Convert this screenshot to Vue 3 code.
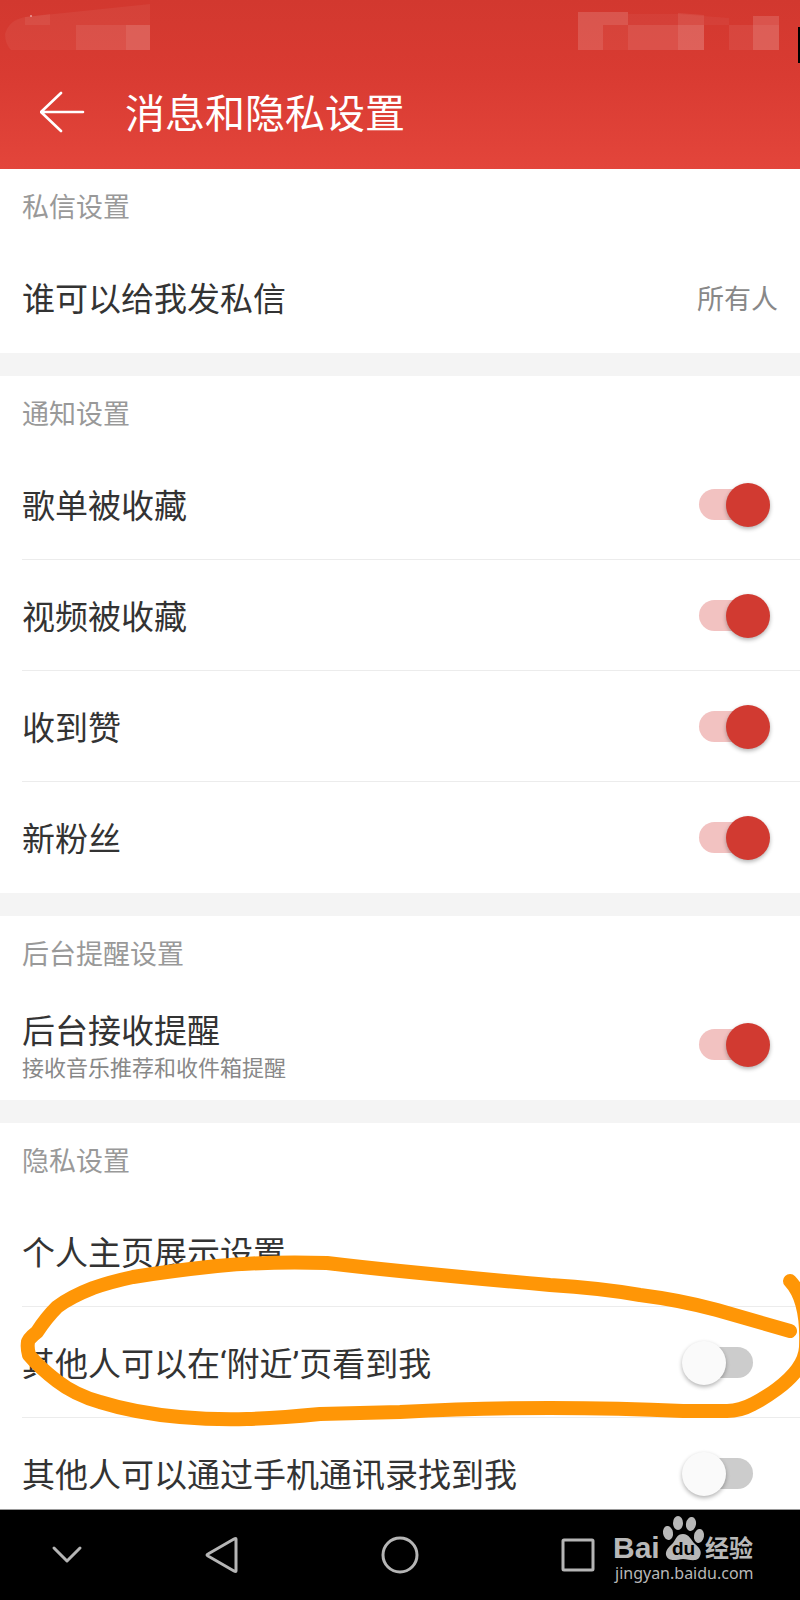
<template>
    <div class="app">
        <header class="header">
            <div class="status">
                <svg class="status__mosaic" width="145" height="54" viewBox="0 0 145 54">
                    <path d="M0 34Q4 20 20 17L145 4V50H6Q0 44 0 34Z" fill="#fff" fill-opacity=".05" />
                    <path d="M20 17L45 14V25H20Z" fill="#fff" fill-opacity=".06" />
                    <rect x="71" y="25" width="50" height="25" fill="#fff" fill-opacity=".08" />
                    <rect x="121" y="25" width="24" height="25" fill="#fff" fill-opacity=".15" />
                    <circle cx="26" cy="16" r="1" fill="#fff" fill-opacity=".5" />
                </svg>
                <svg class="status__mosaic" width="201" height="54" viewBox="0 0 201 54">
                    <path d="M50 14H100L151 18V25H50Z" fill="#fff" fill-opacity=".04" />
                    <path d="M0 12H50V25H25V50H0Z" fill="#fff" fill-opacity=".15" />
                    <rect x="25" y="25" width="25" height="25" fill="#fff" fill-opacity=".05" />
                    <rect x="50" y="25" width="50" height="25" fill="#fff" fill-opacity=".12" />
                    <path d="M100 13L126 15V25H100Z" fill="#fff" fill-opacity=".08" />
                    <rect x="100" y="25" width="26" height="25" fill="#fff" fill-opacity=".2" />
                    <rect x="151" y="25" width="24" height="25" fill="#fff" fill-opacity=".07" />
                    <rect x="175" y="16" width="26" height="9" fill="#fff" fill-opacity=".14" />
                    <rect x="175" y="25" width="26" height="25" fill="#fff" fill-opacity=".19" />
                </svg>
                <i class="status__edge"></i>
            </div>
            <div class="toolbar">
                <button class="toolbar__back" type="button" aria-label="返回">
                    <svg width="46" height="42" viewBox="0 0 46 42">
                        <path d="M21 2L1 21L21 40M2 21H43" fill="none" stroke="#fff" stroke-width="2.6" stroke-linecap="round" stroke-linejoin="round" />
                    </svg>
                </button>
                <h1 class="toolbar__title">消息和隐私设置</h1>
            </div>
        </header>

        <main class="list">
            <section v-for="group in groups" :key="group.title" class="group">
                <h2 class="group__title">{{ group.title }}</h2>
                <template v-for="item in group.items" :key="item.name">
                    <label v-if="'on' in item" class="row">
                        <span class="row__text">
                            <span class="row__name">{{ item.name }}</span>
                            <span v-if="item.desc" class="row__desc">{{ item.desc }}</span>
                        </span>
                        <input v-model="item.on" class="switch" type="checkbox" />
                    </label>
                    <button v-else class="row" type="button">
                        <span class="row__text">
                            <span class="row__name">{{ item.name }}</span>
                        </span>
                        <span v-if="item.value" class="row__value">{{ item.value }}</span>
                    </button>
                </template>
                <svg v-if="group.marked" class="mark" viewBox="0 0 800 200">
                    <path d="M790 91Q755 81 717 70Q680 60 640 55Q600 48 550 45Q480 39 400 31Q360 27 327 23Q270 21 217 26Q170 31 133 37Q110 42 93 48Q70 57 57 67Q46 78 37 92Q28 99 28 102Q27 108 29 115Q40 128 57 141Q75 155 100 162Q135 173 180 177Q215 180 247 179Q280 178 320 174Q360 173 400 172Q480 168 550 168Q620 168 683 171H727Q740 171 753 164Q765 158 777 149Q805 128 806 107Q808 60 790 41" />
                </svg>
            </section>
        </main>

        <nav class="nav">
            <button class="nav__btn" type="button" aria-label="收起">
                <svg width="32" height="20" viewBox="0 0 32 20"><path d="M3 3L16 16L29 3" /></svg>
            </button>
            <button class="nav__btn" type="button" aria-label="返回">
                <svg width="36" height="40" viewBox="0 0 36 40"><path d="M32 4V36Q32 37 30 36L4 21Q2 20 4 19L30 4Q32 3 32 4Z" /></svg>
            </button>
            <button class="nav__btn" type="button" aria-label="主页">
                <svg width="40" height="40" viewBox="0 0 40 40"><circle cx="20" cy="20" r="17" /></svg>
            </button>
            <button class="nav__btn" type="button" aria-label="多任务">
                <svg width="36" height="36" viewBox="0 0 36 36"><rect x="3" y="3" width="30" height="30" rx="1" /></svg>
            </button>
            <svg class="watermark" width="148" height="76" viewBox="0 0 148 76">
                <g fill="#b8b8b8">
                    <text class="watermark__bai" x="1" y="42">Bai</text>
                    <ellipse cx="56" cy="17" rx="5" ry="7" transform="rotate(-10 56 17)" />
                    <ellipse cx="66" cy="7" rx="5" ry="7" />
                    <ellipse cx="79" cy="8" rx="5" ry="7" transform="rotate(10 79 8)" />
                    <ellipse cx="87" cy="20" rx="5" ry="7" transform="rotate(10 87 20)" />
                    <path d="M71 18C77 18 79 24 83 28C88 32 90 36 88 40C86 46 79 44 71 43C64 44 56 46 54 39C53 34 58 30 61 27C64 23 65 18 71 18Z" />
                    <text class="watermark__cn" x="93" y="41">经验</text>
                    <text class="watermark__url" x="3" y="63">jingyan.baidu.com</text>
                </g>
                <text class="watermark__du" x="60" y="39">du</text>
            </svg>
        </nav>
    </div>
</template>

<script setup>
import { reactive } from 'vue';

const groups = reactive([
    { title: '私信设置', items: [{ name: '谁可以给我发私信', value: '所有人' }] },
    {
        title: '通知设置',
        items: [
            { name: '歌单被收藏', on: true },
            { name: '视频被收藏', on: true },
            { name: '收到赞', on: true },
            { name: '新粉丝', on: true }
        ]
    },
    { title: '后台提醒设置', items: [{ name: '后台接收提醒', desc: '接收音乐推荐和收件箱提醒', on: true }] },
    {
        title: '隐私设置',
        marked: true,
        items: [
            { name: '个人主页展示设置' },
            { name: '其他人可以在‘附近’页看到我', on: false },
            { name: '其他人可以通过手机通讯录找到我', on: false }
        ]
    }
]);
</script>

<style>
body {
    margin: 0;
    background: #fff;
}
</style>

<style scoped>
.app {
    display: flex;
    flex-direction: column;
    height: 100vh;
    font-family: Roboto, 'Noto Sans CJK SC', sans-serif;
    color: #333;
}
button {
    border: none;
    padding: 0;
    background: transparent;
    font: inherit;
    color: inherit;
    cursor: pointer;
}
svg {
    display: block;
}
.header {
    flex: none;
    background: linear-gradient(#d2382f, #d93b32 45%, #e3453b);
}
.status {
    position: relative;
    display: flex;
    justify-content: space-between;
    height: 54px;
    padding: 0 21px 0 5px;
}
.status__edge {
    position: absolute;
    top: 27px;
    right: 0;
    width: 2px;
    height: 36px;
    background: #000;
}
.toolbar {
    display: flex;
    align-items: center;
    gap: 39px;
    height: 115px;
    padding: 0 40px;
}
.toolbar__title {
    margin: 0;
    padding-top: 6px;
    font-size: 40px;
    font-weight: 400;
    line-height: 60px;
    color: #fff;
}
.list {
    flex: 1;
    min-height: 0;
    overflow-y: auto;
    scrollbar-width: none;
}
.group {
    position: relative;
}
.group + .group {
    border-top: 23px solid #f4f4f4;
}
.group__title {
    margin: 0;
    padding: 18px 22px 13px;
    font-size: 27px;
    font-weight: 400;
    line-height: 42px;
    color: #999;
}
.row {
    position: relative;
    display: flex;
    align-items: center;
    justify-content: space-between;
    box-sizing: border-box;
    width: 100%;
    height: 111px;
    padding: 0 22px;
    text-align: left;
    cursor: pointer;
}
.row:not(:last-child)::after {
    content: '';
    position: absolute;
    right: 0;
    bottom: 0;
    left: 22px;
    height: 1px;
    background: #ececec;
}
.row__text {
    display: flex;
    flex-direction: column;
    padding-top: 4px;
}
.row__name {
    font-size: 33px;
    line-height: 44px;
}
.row__desc {
    font-size: 22px;
    line-height: 30px;
    color: #888;
}
.row__value {
    padding-top: 4px;
    font-size: 27px;
    line-height: 42px;
    color: #888;
}
.switch {
    position: relative;
    flex: none;
    appearance: none;
    width: 88px;
    height: 44px;
    margin: 0 8px 0 0;
    cursor: pointer;
}
.switch::before {
    content: '';
    position: absolute;
    inset: 6px 17px 7px 17px;
    border-radius: 16px;
    background: #ccc;
}
.switch::after {
    content: '';
    position: absolute;
    top: 0;
    left: 0;
    width: 44px;
    height: 44px;
    border-radius: 50%;
    background: #fafafa;
    box-shadow: 0 2px 4px rgba(0, 0, 0, 0.3);
}
.switch:checked::before {
    background: #f2c2c1;
}
.switch:checked::after {
    left: 44px;
    background: #d13a31;
}
.mark {
    position: absolute;
    top: 117px;
    left: 0;
    width: 100%;
    fill: none;
    stroke: #ff9606;
    stroke-width: 14px;
    stroke-linecap: round;
    stroke-linejoin: round;
    pointer-events: none;
}
.nav {
    position: relative;
    flex: none;
    display: grid;
    grid-template-columns: 3fr 4fr 4fr 4fr 3fr;
    height: 90px;
    border-top: 1px solid #999;
    background: #000;
}
.nav__btn {
    display: flex;
    align-items: center;
    justify-content: center;
    fill: none;
    stroke: #b5b5b5;
    stroke-width: 3px;
    stroke-linecap: round;
    stroke-linejoin: round;
}
.watermark {
    position: absolute;
    right: 40px;
    bottom: 8px;
    overflow: visible;
}
.watermark__bai {
    font: bold 30px 'Liberation Sans', sans-serif;
}
.watermark__du {
    font: bold 19px 'Liberation Sans', sans-serif;
}
.watermark__cn {
    font: bold 24px 'Liberation Sans', 'Noto Sans CJK SC', sans-serif;
}
.watermark__url {
    font: 16px 'Noto Sans', sans-serif;
}
</style>
